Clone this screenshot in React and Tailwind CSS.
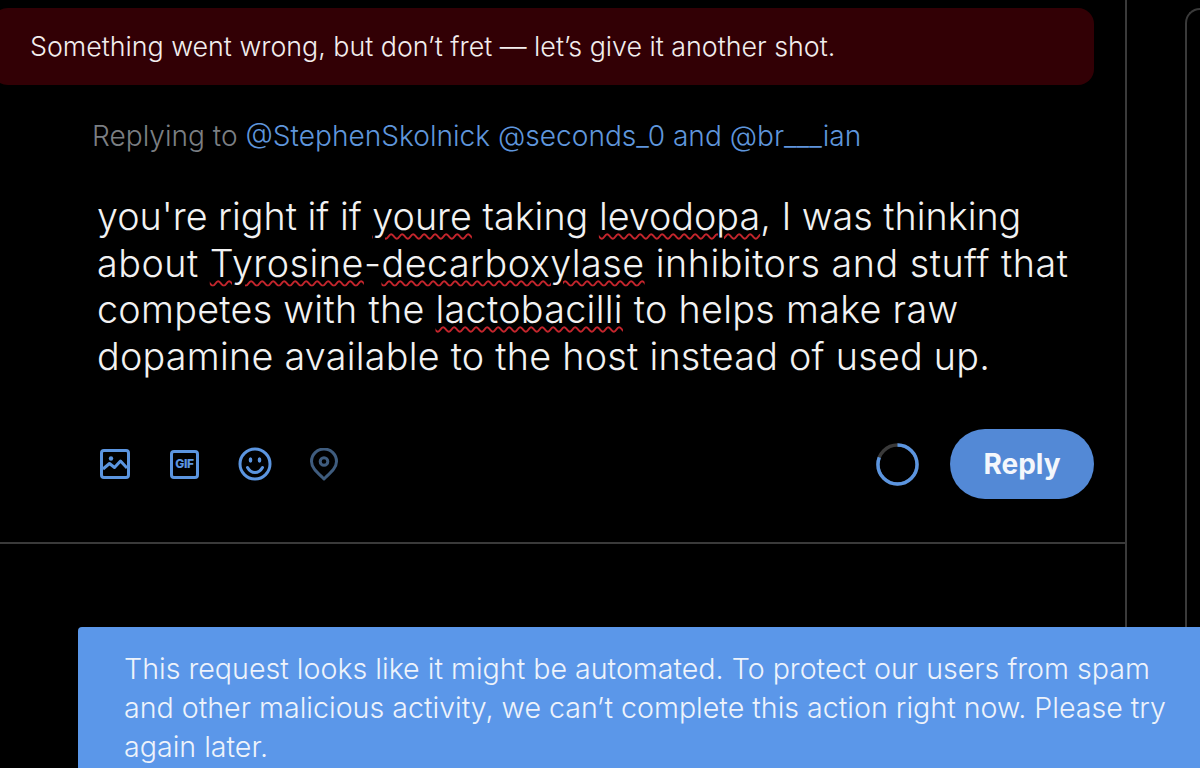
const bodyFont = { fontFamily: 'Inter, "Noto Sans", "Liberation Sans", sans-serif' };

const Squiggle = ({ children }) => (
  <span className="underline decoration-wavy decoration-[#c4252c] decoration-[1.5px] underline-offset-[3px]">{children}</span>
);

const ImageIcon = () => (
  <svg width="30" height="30" viewBox="0 0 30 30" fill="none" stroke="#5b95e0" strokeWidth="3">
    <rect x="1.500" y="1.500" width="27" height="27" rx="2.500" />
    <circle cx="11" cy="9.500" r="2.200" fill="#5b95e0" stroke="none" />
    <path d="M3 20l6.500-5.500 5 4 6-6.500 6.500 7" strokeLinejoin="round" />
  </svg>
);

const Smiley = () => (
  <svg width="34" height="34" viewBox="0 0 34 34" fill="none" stroke="#5b95e0" strokeWidth="3">
    <circle cx="17" cy="17" r="15" />
    <path d="M9.500 20.500c2 3.600 4.600 5 7.500 5s5.500-1.400 7.500-5" strokeLinecap="round" />
    <ellipse cx="12.500" cy="13" rx="1.800" ry="2.800" fill="#5b95e0" stroke="none" />
    <ellipse cx="21.500" cy="13" rx="1.800" ry="2.800" fill="#5b95e0" stroke="none" />
  </svg>
);

const Pin = () => (
  <svg width="28" height="33" viewBox="0 0 28 33" fill="none" stroke="#3f5c7e" strokeWidth="3">
    <path d="M14 31C8 25 1.500 20 1.500 13.500a12.500 12.500 0 0 1 25 0C26.500 20 20 25 14 31z" strokeLinejoin="round" />
    <circle cx="14" cy="13.500" r="3.800" />
  </svg>
);

export default function App() {
  return (
    <div className="relative flex h-[768px] w-[1200px] overflow-hidden bg-black" style={bodyFont}>
      <main className="h-[627px] w-[1127px] shrink-0 border-r-2 border-[#3a3a3a]">
        <div className="mt-2 ml-[-8px] flex h-[77px] w-[1102px] items-center rounded-[16px] bg-[#320005] pl-[38px] text-[26.8px] font-[350] text-[#f2eeee]">
          Something went wrong, but don’t fret — let’s give it another shot.
        </div>

        <div className="mt-[31px] pl-[92px] text-[28.1px] leading-[40px] font-[350] text-[#7b7f83]">
          Replying to <span className="text-[#5f96dc]">@StephenSkolnick @seconds_0 and @br___ian</span>
        </div>

        <div className="mt-[37px] w-[1100px] pl-[97px] text-[37.7px] leading-[46.5px] font-[350] text-[#f2f2f2]">
          <div>you're right if if <Squiggle>youre</Squiggle> taking <Squiggle>levodopa</Squiggle>, I was thinking</div>
          <div className="tracking-[0.5px]">about <Squiggle>Tyrosine</Squiggle>-<Squiggle>decarboxylase</Squiggle> inhibitors and stuff that</div>
          <div className="tracking-[0.3px]">competes with the <Squiggle>lactobacilli</Squiggle> to helps make raw</div>
          <div className="tracking-[0.26px]">dopamine available to the host instead of used up.</div>
        </div>

        <div className="mt-[50px] flex h-[70px] w-[1094px] items-center justify-between pl-[100px]">
          <div className="flex items-center">
            <ImageIcon />
            <div className="ml-[40px] flex h-[29px] w-[29px] items-center justify-center rounded-[4px] border-[3px] border-[#5b95e0] text-[12px] font-extrabold tracking-[-0.3px] text-[#5b95e0]">
              GIF
            </div>
            <div className="ml-[39px]"><Smiley /></div>
            <div className="ml-[38px]"><Pin /></div>
          </div>
          <div className="flex items-center gap-[31px]">
            <svg width="43" height="43" viewBox="0 0 44 44" fill="none" strokeWidth="3.500">
              <circle cx="22" cy="22" r="20" stroke="#3a3a3a" />
              <circle cx="22" cy="22" r="20" stroke="#5b95e0" strokeDasharray="101 126" transform="rotate(-90 22 22)" />
            </svg>
            <button type="button" className="flex h-[70px] w-[144px] items-center justify-center rounded-full bg-[#5389d6] text-[28px] font-bold text-[#f4f7fc]">
              Reply
            </button>
          </div>
        </div>

        <div className="mt-[43px] h-[2px] w-full bg-[#3a3a3a]" />
      </main>

      <div className="mt-2 ml-[58px] h-[619px] flex-1 rounded-tl-[20px] border-t-2 border-l-2 border-[#3a3a3a]" />

      <div className="absolute top-[627px] left-[78px] h-[141px] w-[1122px] rounded-tl-[4px] bg-[#5b97e9] pt-[22px] pl-[46px] text-[28.6px] leading-[39px] font-[350] text-[#eef3fb]">
        <div>This request looks like it might be automated. To protect our users from spam</div>
        <div>and other malicious activity, we can’t complete this action right now. Please try</div>
        <div>again later.</div>
      </div>
    </div>
  );
}
